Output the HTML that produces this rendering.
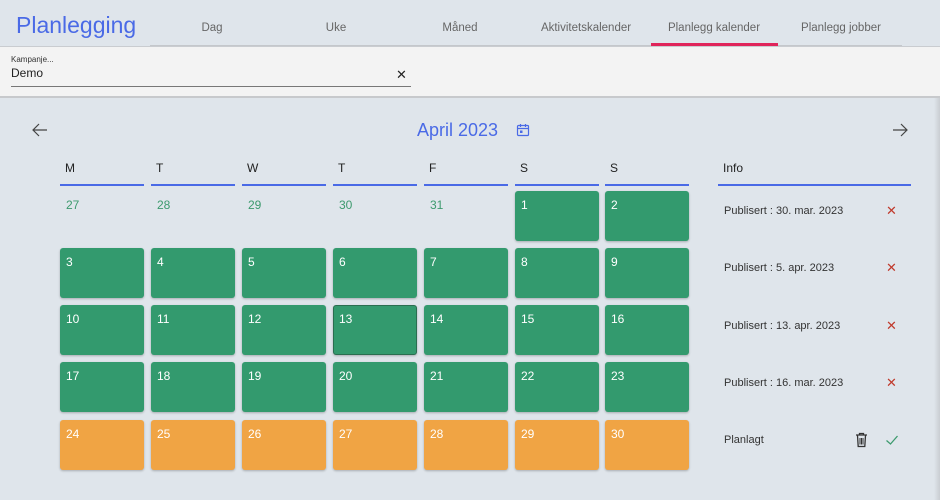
<!DOCTYPE html>
<html><head><meta charset="utf-8"><style>
*{margin:0;padding:0;box-sizing:border-box}
body{width:940px;height:500px;overflow:hidden;background:#dfe5eb;font-family:"Liberation Sans",sans-serif;position:relative}
.hdr{position:absolute;left:0;top:0;width:940px;height:47px;background:#dfe5eb;border-bottom:1px solid #c9ccd0}
.title{position:absolute;left:16px;top:12px;font-size:23px;color:#4a6ae6}
.tab{position:absolute;top:22px;width:126px;text-align:center;font-size:11.5px;color:#666}
.ul{position:absolute;left:651px;top:43px;width:127px;height:3px;background:#e0245a}
.kp{position:absolute;left:0;top:47px;width:940px;height:51px;background:#f3f3f3;border-bottom:2px solid #c7c9cc}
.abs{position:absolute}
.dh{position:absolute;top:161px;font-size:12px;color:#222}
.bl{position:absolute;top:184px;height:2px;background:#4a6ae6}
.c{position:absolute;width:84px;height:50px;border-radius:3px;color:#fff;font-size:12px;padding:7px 0 0 6px;box-shadow:0 1px 2px rgba(0,0,0,.25)}
.g{background:#339a6e}.o{background:#f0a444}
.pd{position:absolute;top:198px;font-size:12px;color:#3d9a6e}
.inf{position:absolute;left:724px;font-size:11px;color:#333}
.x{position:absolute;left:886px;font-size:13px;color:#c0392b}
</style></head><body>
<div class="hdr">
<div class="title">Planlegging</div>
<div class="tab" style="left:149px">Dag</div>
<div class="tab" style="left:273px">Uke</div>
<div class="tab" style="left:397px">Måned</div>
<div class="tab" style="left:523px">Aktivitetskalender</div>
<div class="tab" style="left:651px">Planlegg kalender</div>
<div class="tab" style="left:778px">Planlegg jobber</div>
<div class="abs" style="left:150px;top:45px;width:752px;height:1px;background:#c4c7cb"></div>
<div class="ul"></div>
</div>
<div class="kp">
<div class="abs" style="left:11px;top:8px;font-size:8px;color:#333">Kampanje...</div>
<div class="abs" style="left:11px;top:19px;font-size:12px;color:#222">Demo</div>
<div class="abs" style="left:396px;top:20px;font-size:13px;color:#222">✕</div>
<div class="abs" style="left:11px;top:39px;width:400px;height:1px;background:#777"></div>
</div>
<svg class="abs" style="left:31px;top:122px" width="18" height="16" viewBox="0 0 18 16"><path d="M16 8H2M8 2L2 8l6 6" fill="none" stroke="#444" stroke-width="1.2"/></svg>
<svg class="abs" style="left:891px;top:122px" width="18" height="16" viewBox="0 0 18 16"><path d="M2 8h14M10 2l6 6-6 6" fill="none" stroke="#444" stroke-width="1.2"/></svg>
<div class="abs" style="left:417px;top:120px;font-size:18px;color:#4a6ae6">April 2023</div>
<svg class="abs" style="left:516px;top:123px" width="14" height="14" viewBox="0 0 14 14"><rect x="1.5" y="2.5" width="11" height="10" rx="1" fill="none" stroke="#4a6ae6" stroke-width="1.2"/><path d="M1.5 5.5h11M4.5 1v3M9.5 1v3" stroke="#4a6ae6" stroke-width="1.2"/><rect x="4" y="7.5" width="2.5" height="2.5" fill="#4a6ae6"/></svg>
<div class="dh" style="left:65px">M</div><div class="dh" style="left:156px">T</div><div class="dh" style="left:247px">W</div><div class="dh" style="left:338px">T</div><div class="dh" style="left:429px">F</div><div class="dh" style="left:520px">S</div><div class="dh" style="left:610px">S</div>
<div class="bl" style="left:60px;width:84px"></div><div class="bl" style="left:151px;width:84px"></div><div class="bl" style="left:242px;width:84px"></div><div class="bl" style="left:333px;width:84px"></div><div class="bl" style="left:424px;width:84px"></div><div class="bl" style="left:515px;width:84px"></div><div class="bl" style="left:605px;width:84px"></div>
<div class="dh" style="left:723px">Info</div>
<div class="bl" style="left:718px;width:193px"></div>
<div class="pd" style="left:66px">27</div><div class="pd" style="left:157px">28</div><div class="pd" style="left:248px">29</div><div class="pd" style="left:339px">30</div><div class="pd" style="left:430px">31</div>
<div class="c g" style="left:515px;top:191px">1</div><div class="c g" style="left:605px;top:191px">2</div>
<div class="c g" style="left:60px;top:248px">3</div><div class="c g" style="left:151px;top:248px">4</div><div class="c g" style="left:242px;top:248px">5</div><div class="c g" style="left:333px;top:248px">6</div><div class="c g" style="left:424px;top:248px">7</div><div class="c g" style="left:515px;top:248px">8</div><div class="c g" style="left:605px;top:248px">9</div>
<div class="c g" style="left:60px;top:305px">10</div><div class="c g" style="left:151px;top:305px">11</div><div class="c g" style="left:242px;top:305px">12</div><div class="c g" style="left:333px;top:305px;border:1px solid #2a6e50;padding:6px 0 0 5px">13</div><div class="c g" style="left:424px;top:305px">14</div><div class="c g" style="left:515px;top:305px">15</div><div class="c g" style="left:605px;top:305px">16</div>
<div class="c g" style="left:60px;top:362px">17</div><div class="c g" style="left:151px;top:362px">18</div><div class="c g" style="left:242px;top:362px">19</div><div class="c g" style="left:333px;top:362px">20</div><div class="c g" style="left:424px;top:362px">21</div><div class="c g" style="left:515px;top:362px">22</div><div class="c g" style="left:605px;top:362px">23</div>
<div class="c o" style="left:60px;top:420px">24</div><div class="c o" style="left:151px;top:420px">25</div><div class="c o" style="left:242px;top:420px">26</div><div class="c o" style="left:333px;top:420px">27</div><div class="c o" style="left:424px;top:420px">28</div><div class="c o" style="left:515px;top:420px">29</div><div class="c o" style="left:605px;top:420px">30</div>
<div class="inf" style="top:205px">Publisert : 30. mar. 2023</div><div class="x" style="top:203px">✕</div>
<div class="inf" style="top:262px">Publisert : 5. apr. 2023</div><div class="x" style="top:260px">✕</div>
<div class="inf" style="top:320px">Publisert : 13. apr. 2023</div><div class="x" style="top:318px">✕</div>
<div class="inf" style="top:377px">Publisert : 16. mar. 2023</div><div class="x" style="top:375px">✕</div>
<div class="inf" style="top:434px">Planlagt</div>
<svg class="abs" style="left:855px;top:432px" width="13" height="16" viewBox="0 0 13 16"><path d="M1 3h11M4.5 3V1.5h4V3M2.5 3.5l.7 11h6.6l.7-11" fill="none" stroke="#333" stroke-width="1.3"/><path d="M5 6v6.5M6.5 6v6.5M8 6v6.5" stroke="#333" stroke-width="1"/></svg>
<svg class="abs" style="left:885px;top:434px" width="14" height="12" viewBox="0 0 14 12"><path d="M1.5 6.5l4 3.5 7-8" fill="none" stroke="#3d9a6e" stroke-width="1.3"/></svg>
<div class="abs" style="left:934px;top:98px;width:6px;height:402px;background:linear-gradient(90deg,#dfe5eb,#c9cdd2)"></div>
</body></html>
